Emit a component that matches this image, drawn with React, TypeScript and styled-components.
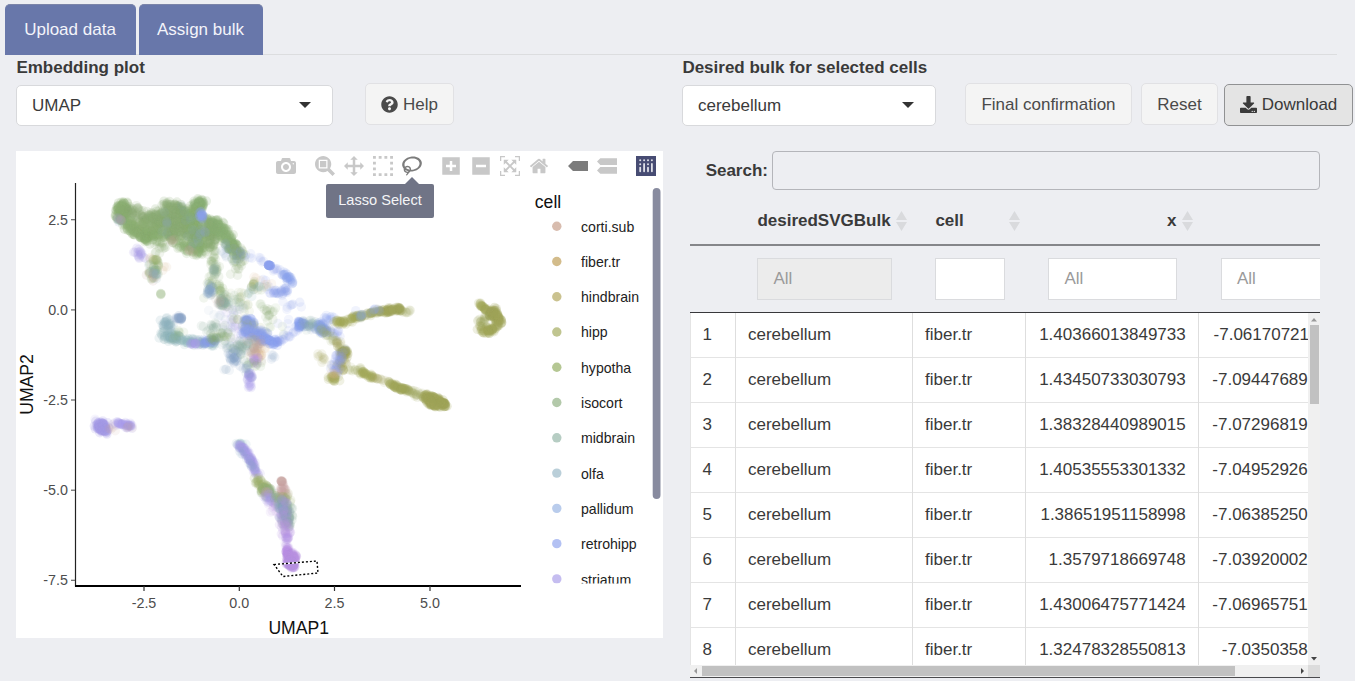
import React from "react";
import styled, { createGlobalStyle } from "styled-components";
import { FaDownload, FaQuestionCircle } from "react-icons/fa";

const GlobalStyle = createGlobalStyle`
  * { box-sizing: border-box; }
  body {
    margin: 0;
    background: #edeef2;
    color: #3a3a3a;
    font-family: "Liberation Sans", Arial, sans-serif;
    font-size: 17px;
    overflow: hidden;
  }
`;

const Page = styled.div`
  width: 1355px;
  height: 681px;
  overflow: hidden;
`;

const TabBar = styled.nav`
  display: flex;
  gap: 3px;
  width: 1332px;
  height: 51px;
  margin: 4px 0 0 5px;
  border-bottom: 1px solid #dcdddf;
`;

const Tab = styled.div<{ $width: number }>`
  width: ${(p) => p.$width}px;
  height: 51px;
  padding-right: 1px;
  line-height: 49px;
  text-align: center;
  color: #f3f4fa;
  background: #6877aa;
  border-top: 1px solid #7b84a8;
  border-radius: 5px 5px 0 0;
`;

const Columns = styled.div`
  display: flex;
  padding-left: 16px;
`;

const Column = styled.section<{ $width: number }>`
  width: ${(p) => p.$width}px;
  flex: none;
`;

const FieldLabel = styled.div`
  height: 28px;
  padding-top: 3px;
  padding-left: 0.4px;
  line-height: 20px;
  font-weight: bold;
`;

const Controls = styled.div`
  display: flex;
  align-items: flex-start;
  height: 68px;
`;

const Select = styled.div<{ $width: number; $gap: number }>`
  display: flex;
  align-items: center;
  justify-content: space-between;
  width: ${(p) => p.$width}px;
  height: 41px;
  margin: 2px ${(p) => p.$gap}px 0 0;
  padding: 1px 21px 0 15px;
  background: #fff;
  border: 1px solid #d8d9dc;
  border-radius: 5px;

  &::after {
    content: "";
    margin-top: -3px;
    border: 6px solid transparent;
    border-top-color: #333;
    border-bottom: 0;
  }
`;

const Button = styled.button<{ $width: number; $gap?: number; $active?: boolean }>`
  display: flex;
  align-items: center;
  justify-content: center;
  gap: 5px;
  width: ${(p) => p.$width}px;
  height: 42px;
  margin: ${(p) => (p.$active ? 1 : 0)}px ${(p) => p.$gap ?? 0}px 0 0;
  padding: ${(p) => (p.$active ? 0 : 2)}px 0 0;
  flex: none;
  white-space: nowrap;
  font: inherit;
  color: ${(p) => (p.$active ? "#3a3a3a" : "#4a4a4a")};
  background: ${(p) => (p.$active ? "#e4e4e4" : "#f4f4f4")};
  border: 1px solid ${(p) => (p.$active ? "#909193" : "#e1e1e4")};
  border-radius: 5px;

  svg {
    margin-top: -2px;
  }
`;

/* ---------- plot ---------- */

const PlotCard = styled.div`
  position: relative;
  width: 647px;
  height: 487px;
  background: #fff;
`;

const Chart = styled.svg`
  display: block;
  font-family: "Liberation Sans", Arial, sans-serif;
`;

const ModeBar = styled.div`
  position: absolute;
  top: 5px;
  right: 7px;
  display: flex;
  gap: 18.8px;
`;

const ModeGroup = styled.div`
  display: flex;
  gap: 9.3px;
`;

const ModeIcon = styled.svg<{ $on?: boolean }>`
  display: block;
  width: 20px;
  height: 20px;
  fill: ${(p) => (p.$on ? "#7c7c7c" : "#c8c8c8")};
`;

const Tooltip = styled.div`
  position: absolute;
  left: 310px;
  top: 33px;
  width: 108px;
  height: 34px;
  line-height: 33px;
  text-align: center;
  font-size: 14.6px;
  color: #f4f4f7;
  background: #707486;
  border-radius: 2px;

  &::before {
    content: "";
    position: absolute;
    left: 79px;
    top: -7px;
    border: 7px solid transparent;
    border-top: 0;
    border-bottom-color: #707486;
  }
`;

type Glyph = { w: number; d: string; on?: boolean };

const glyphGroups: Glyph[][] = [
  [{ w: 1000, d: "m500 450c-83 0-150-67-150-150 0-83 67-150 150-150 83 0 150 67 150 150 0 83-67 150-150 150z m400 150h-120c-16 0-34 13-39 29l-31 93c-6 15-23 28-40 28h-340c-16 0-34-13-39-28l-31-94c-6-15-23-28-40-28h-120c-55 0-100-45-100-100v-450c0-55 45-100 100-100h800c55 0 100 45 100 100v450c0 55-45 100-100 100z m-400-550c-138 0-250 112-250 250 0 138 112 250 250 250 138 0 250-112 250-250 0-138-112-250-250-250z m365 380c-19 0-35 16-35 35 0 19 16 35 35 35 19 0 35-16 35-35 0-19-16-35-35-35z" }],
  [
    { w: 1000, d: "m1000-25l-250 251c40 63 63 138 63 218 0 224-182 406-407 406-224 0-406-182-406-406s183-406 407-406c80 0 155 22 218 62l250-250 125 125z m-812 250l0 438 437 0 0-438-437 0z m62 375l313 0 0-312-313 0 0 312z" },
    { w: 1000, d: "m1000 350l-187 188 0-125-250 0 0 250 125 0-188 187-187-187 125 0 0-250-250 0 0 125-188-188 186-187 0 125 252 0 0-250-125 0 187-188 188 188-125 0 0 250 250 0 0-126 187 188z" },
    { w: 1000, d: "m0 850l0-143 143 0 0 143-143 0z m286 0l0-143 143 0 0 143-143 0z m285 0l0-143 143 0 0 143-143 0z m286 0l0-143 143 0 0 143-143 0z m-857-286l0-143 143 0 0 143-143 0z m857 0l0-143 143 0 0 143-143 0z m-857-285l0-143 143 0 0 143-143 0z m857 0l0-143 143 0 0 143-143 0z m-857-286l0-143 143 0 0 143-143 0z m286 0l0-143 143 0 0 143-143 0z m285 0l0-143 143 0 0 143-143 0z m286 0l0-143 143 0 0 143-143 0z" },
    { w: 1031, on: true, d: "m1018 538c-36 207-290 336-568 286-277-48-473-256-436-463 10-57 36-108 76-151-13-66 11-137 68-183 34-28 75-41 114-42l-55-70 0 0c-2-1-3-2-4-3-10-14-8-34 5-45 14-11 34-8 45 4 1 1 2 3 2 5l0 0 113 140c16 11 31 24 45 40 4 3 6 7 8 11 48-3 100 0 151 9 278 48 473 255 436 462z m-624-379c-80 14-149 48-197 96 42 42 109 47 156 9 33-26 47-66 41-105z m-187-74c-19 16-33 37-39 60 50-32 109-55 174-68-42-25-95-24-135 8z m360 75c-34-7-69-9-102-8 8 62-16 128-68 170-73 59-175 54-244-5-9 20-16 40-20 61-28 159 121 317 333 354s407-60 434-217c28-159-121-318-333-355z" },
  ],
  [
    { w: 875, d: "m1 787l0-875 875 0 0 875-875 0z m687-500l-187 0 0-187-125 0 0 187-188 0 0 125 188 0 0 187 125 0 0-187 187 0 0-125z" },
    { w: 875, d: "m0 788l0-876 875 0 0 876-875 0z m688-500l-500 0 0 125 500 0 0-125z" },
    { w: 1000, d: "m250 850l-187 0-63 0 0-62 0-188 63 0 0 188 187 0 0 62z m688 0l-188 0 0-62 188 0 0-188 62 0 0 188 0 62-62 0z m-875-938l0 188-63 0 0-188 0-62 63 0 187 0 0 62-187 0z m875 188l0-188-188 0 0-62 188 0 62 0 0 62 0 188-62 0z m-125 188l-1 0-93-94-156 156 156 156 92-93 2 0 0 250-250 0 0-2 93-92-156-156-156 156 94 92 0 2-250 0 0-250 0 0 93 93 157-156-157-156-93 94 0 0 0-250 250 0 0 0-94 93 156 157 156-157-93-93 0 0 250 0 0 250z" },
    { w: 929, d: "m786 296v-267q0-15-11-26t-25-10h-214v214h-143v-214h-214q-15 0-25 10t-11 26v267q0 1 0 2t0 2l321 264 321-264q1-1 1-4z m124 39l-34-41q-5-5-12-6h-2q-7 0-12 3l-386 322-386-322q-7-4-13-4-7 2-12 7l-35 41q-4 5-3 13t6 12l401 334q18 15 42 15t43-15l136-114v109q0 8 5 13t13 5h107q8 0 13-5t5-13v-227l122-102q5-5 6-12t-4-13z" },
  ],
  [
    { w: 1500, on: true, d: "m375 725l0 0-375-375 375-374 0-1 1125 0 0 750-1125 0z" },
    { w: 1125, d: "m187 786l0 2-187-188 188-187 0 0 937 0 0 373-938 0z m0-499l0 1-187-188 188-188 0 0 937 0 0 376-938-1z" },
  ],
];

const PlotlyLogo = () => (
  <ModeIcon viewBox="0 0 20 20">
    <rect width="20" height="20" fill="#474c73" />
    <g fill="#dfe0e8">
      <circle cx="4.2" cy="4.2" r="1" /><circle cx="8.1" cy="4.2" r="1" />
      <circle cx="12" cy="4.2" r="1" /><circle cx="15.9" cy="4.2" r="1" />
      <circle cx="4.2" cy="8.2" r="1" /><circle cx="12" cy="8.2" r="1" />
      <rect x="3.3" y="10.8" width="1.8" height="5.4" rx="0.9" />
      <rect x="7.2" y="7" width="1.8" height="9.2" rx="0.9" />
      <rect x="11.1" y="10.8" width="1.8" height="5.4" rx="0.9" />
      <rect x="15" y="7" width="1.8" height="9.2" rx="0.9" />
    </g>
  </ModeIcon>
);

const OLIVE = "#a0a55a";
const GREEN = "#8aad73";
const MOSS = "#9cad6c";
const SAGE = "#8cae9b";
const TEAL = "#8fb3bb";
const STEEL = "#8aa5c8";
const BLUE = "#8a9fec";
const PERI = "#a79ae8";
const VIOLET = "#b992e3";
const ROSE = "#c9a39f";
const TAN = "#d9b48c";

/* colour, path through the cluster, cell count, spread, opacity */
type Cluster = [string, number[], number, number, number];

const clusters: Cluster[] = [
  // large isocortex cloud
  [GREEN, [123, 206, 123, 212, 120, 221], 120, 5, 0.2],
  [GREEN, [130, 213, 158, 222], 110, 7, 0.13],
  [GREEN, [125, 222, 136, 231, 147, 239], 110, 4.4, 0.2],
  [GREEN, [142, 228, 160, 228], 70, 7, 0.15],
  [GREEN, [144, 238, 164, 234, 180, 237], 85, 5.5, 0.16],
  [GREEN, [163, 204, 176, 207, 185, 212], 52, 3.4, 0.18],
  [GREEN, [152, 220, 170, 218, 178, 235], 140, 7.5, 0.18],
  [GREEN, [174, 209, 184, 224, 194, 240], 160, 7, 0.18],
  [GREEN, [203, 203, 197, 206, 192, 218], 80, 3.8, 0.19],
  [GREEN, [188, 216, 200, 230, 203, 245], 140, 7.5, 0.16],
  [GREEN, [208, 222, 213, 230, 209, 245], 100, 4.8, 0.18],
  [GREEN, [213, 222, 225, 235, 237, 256], 180, 5.3, 0.19],
  [GREEN, [178, 243, 190, 248, 202, 250], 60, 4.6, 0.16],
  [GREEN, [158, 244, 162, 250], 14, 5, 0.12],
  [GREEN, [211, 246, 218, 270, 208, 294], 46, 4.5, 0.12],
  [SAGE, [216, 266, 212, 275], 12, 2.5, 0.16],
  [GREEN, [236, 248, 242, 258, 235, 276], 30, 4, 0.13],
  [STEEL, [118, 218, 121, 222], 6, 2, 0.14],
  [ROSE, [119, 219, 121, 222], 3, 2, 0.15],
  [STEEL, [165, 212, 168, 235], 7, 5, 0.1],
  [STEEL, [188, 212, 198, 240], 14, 9, 0.09],
  [BLUE, [201, 212, 202, 219], 17, 2, 0.19],
  [STEEL, [203, 230, 197, 241], 8, 3, 0.12],
  [ROSE, [169, 238, 174, 242], 5, 5, 0.1],
  [ROSE, [188, 250, 192, 252], 4, 2, 0.12],
  [STEEL, [222, 243, 236, 262], 14, 5, 0.11],
  // spur below the cloud
  [PERI, [137, 251, 141, 254, 140, 257], 17, 3.4, 0.16],
  [TAN, [142, 262, 165, 266], 7, 4, 0.12],
  [MOSS, [155, 258, 157, 263], 9, 2, 0.2],
  [GREEN, [155, 268, 152, 278], 24, 5, 0.16],
  [ROSE, [150, 275, 155, 277], 9, 4, 0.14],
  [TEAL, [153, 266, 157, 281], 12, 5, 0.14],
  [GREEN, [160.5, 293, 161, 294], 3, 0.5, 0.2],
  // blue arc
  [BLUE, [241, 253, 253, 257, 267, 264], 12, 3, 0.1],
  [BLUE, [269, 265, 269.5, 266], 15, 0.9, 0.23],
  [BLUE, [269, 268, 281, 272], 8, 2.5, 0.11],
  [BLUE, [284, 273, 288, 278, 293, 281], 28, 2.6, 0.16],
  [BLUE, [274, 292, 280, 293, 288, 289], 26, 2.8, 0.15],
  [BLUE, [262, 278, 268, 292], 6, 4, 0.12],
  [TAN, [251, 284, 271, 285], 8, 6, 0.1],
  [MOSS, [252, 283, 255, 286], 9, 2.5, 0.17],
  [TEAL, [262, 286, 248, 296], 10, 4, 0.12],
  [BLUE, [285, 308, 300, 302], 3, 1.5, 0.14],
  // neck region
  [STEEL, [212, 286, 208, 294], 20, 3, 0.17],
  [GREEN, [218, 285, 221, 293], 12, 3, 0.15],
  [SAGE, [222, 298, 224, 306], 38, 4, 0.14],
  [ROSE, [220, 298, 226, 308], 8, 5, 0.1],
  [MOSS, [222, 294, 248, 304], 22, 8, 0.09],
  [SAGE, [230, 298, 242, 309], 15, 6, 0.1],
  [PERI, [228, 312, 240, 340], 46, 12, 0.05],
  [STEEL, [215, 312, 245, 330], 24, 11, 0.07],
  [GREEN, [248, 282, 275, 328], 15, 10, 0.1],
  [BLUE, [292, 300, 285, 327], 9, 8, 0.1],
  [GREEN, [268, 310, 271, 317], 10, 3, 0.13],
  // western arm
  [TEAL, [164, 321, 170, 328], 32, 4, 0.17],
  [STEEL, [177, 319, 181, 317], 19, 2.2, 0.2],
  [TEAL, [163, 333, 171, 339, 179, 337], 65, 3.9, 0.16],
  [GREEN, [180, 332, 174, 340], 8, 4, 0.1],
  [TEAL, [183, 341, 214, 343], 60, 3, 0.15],
  [PERI, [190, 343, 197, 343], 13, 1.8, 0.15],
  [BLUE, [204, 343, 215, 340], 28, 2.4, 0.14],
  [GREEN, [210, 338, 228, 335], 26, 4, 0.14],
  [SAGE, [203, 330, 223, 326], 18, 5.5, 0.12],
  [TEAL, [222, 345, 246, 349], 32, 8, 0.1],
  // centre
  [BLUE, [246, 320, 253, 325], 40, 2.6, 0.18],
  [MOSS, [240, 321, 263, 332], 17, 7, 0.12],
  [BLUE, [245, 330, 255, 335, 264, 337], 105, 5.4, 0.15],
  [BLUE, [263, 338, 271, 342, 278, 342], 42, 2.7, 0.18],
  [STEEL, [232, 354, 236, 360], 28, 4.2, 0.14],
  [SAGE, [235, 346, 258, 348], 30, 7, 0.12],
  [TAN, [250, 349, 262, 354], 20, 6, 0.11],
  [ROSE, [253, 342, 256, 356], 24, 6, 0.12],
  [VIOLET, [257, 357, 254, 364], 13, 2.5, 0.17],
  [GREEN, [242, 363, 263, 366], 12, 6, 0.1],
  [PERI, [249, 371, 250, 379], 18, 2, 0.17],
  [STEEL, [246, 364, 250, 374], 10, 4, 0.12],
  [PERI, [249, 380, 251, 388], 8, 2, 0.15],
  [STEEL, [224, 369, 229, 370], 4, 1.5, 0.1],
  [STEEL, [272, 358, 276, 354], 5, 2, 0.11],
  // bridge to the right
  [BLUE, [278, 343, 290, 334, 297, 326], 17, 3, 0.11],
  [BLUE, [298, 325, 303, 324], 36, 2.7, 0.17],
  [STEEL, [302, 325, 316, 326], 26, 4, 0.11],
  [BLUE, [318, 325, 324, 330], 48, 3.8, 0.16],
  [SAGE, [310, 326, 322, 330], 14, 5, 0.1],
  [BLUE, [324, 328, 337, 337], 20, 4.5, 0.12],
  [BLUE, [326, 316, 331, 322], 11, 3, 0.13],
  [MOSS, [322, 331, 334, 339], 17, 5, 0.12],
  [OLIVE, [334, 323, 348, 322], 28, 2.2, 0.16],
  [OLIVE, [348, 320, 363, 315], 34, 2.2, 0.16],
  [OLIVE, [363, 315, 376, 312], 20, 1.8, 0.15],
  [OLIVE, [376, 312, 387, 311], 25, 1.6, 0.18],
  [OLIVE, [387, 310, 401, 309], 48, 2, 0.19],
  [OLIVE, [400, 311, 411, 312], 8, 1.5, 0.12],
  [STEEL, [361, 315, 361, 316], 7, 1.5, 0.15],
  [BLUE, [350, 314, 386, 309], 8, 3, 0.13],
  // descending olive branch
  [OLIVE, [333, 340, 342, 347], 12, 3, 0.13],
  [OLIVE, [342, 351, 346, 353], 38, 2.8, 0.19],
  [OLIVE, [342, 355, 342, 370], 34, 4, 0.14],
  [OLIVE, [317, 352, 329, 363], 10, 4, 0.11],
  [BLUE, [341, 351, 335, 372], 34, 3.6, 0.12],
  [OLIVE, [332, 377, 336, 379], 24, 3, 0.16],
  [TAN, [331, 371, 335, 377], 6, 4, 0.12],
  [OLIVE, [348, 369, 361, 371], 16, 3, 0.1],
  [OLIVE, [361, 372, 374, 378], 30, 1.5, 0.16],
  [OLIVE, [373, 377, 389, 383], 13, 1.5, 0.11],
  [OLIVE, [389, 383, 399, 388], 26, 1.6, 0.18],
  [OLIVE, [399, 388, 408, 391], 30, 1.6, 0.17],
  [OLIVE, [408, 392, 424, 396], 22, 2.2, 0.12],
  [OLIVE, [424, 396, 437, 400, 446, 406], 105, 2.2, 0.21],
  [OLIVE, [426, 398, 433, 405, 442, 404], 60, 2.2, 0.21],
  // isolated group at the right
  [OLIVE, [480, 304, 483, 307], 16, 1.4, 0.16],
  [OLIVE, [484, 308, 490, 312], 12, 1.6, 0.16],
  [OLIVE, [488, 314, 496, 311], 42, 3.2, 0.22],
  [OLIVE, [494, 314, 500, 321, 493, 331], 56, 2.6, 0.21],
  [OLIVE, [492, 331, 480, 328], 42, 3.2, 0.18],
  [OLIVE, [478, 322, 488, 320], 18, 3.4, 0.12],
  // lower left group
  [PERI, [98, 424, 104, 426, 102, 431], 95, 4, 0.2],
  [PERI, [97, 420, 99, 422], 3, 2, 0.1],
  [ROSE, [109, 427, 114, 427], 5, 3, 0.11],
  [PERI, [116, 423, 125, 425, 133, 426], 42, 2.2, 0.15],
  [ROSE, [125, 426, 133, 427], 4, 1.8, 0.1],
  // lower tail
  [TEAL, [237, 444, 246, 444], 10, 2.2, 0.12],
  [PERI, [239, 445, 247, 453, 253, 464], 75, 2.1, 0.14],
  [PERI, [252, 464, 258, 475], 25, 2, 0.13],
  [STEEL, [238, 444, 257, 474], 14, 2, 0.11],
  [MOSS, [257, 478, 261, 486], 20, 2.6, 0.16],
  [MOSS, [261, 488, 270, 490], 42, 3.2, 0.19],
  [SAGE, [264, 490, 270, 496, 285, 500], 38, 4, 0.14],
  [ROSE, [264, 490, 269, 496], 8, 3, 0.11],
  [PERI, [267, 495, 271, 502], 16, 2.6, 0.14],
  [ROSE, [281.5, 481, 282, 482], 9, 0.6, 0.2],
  [ROSE, [283, 487, 284, 499], 34, 4, 0.13],
  [MOSS, [278, 496, 288, 501], 18, 5.5, 0.12],
  [VIOLET, [273, 504, 282, 516], 18, 5, 0.1],
  [VIOLET, [283, 500, 285, 524], 38, 4, 0.13],
  [SAGE, [280, 501, 287, 510, 289, 527], 80, 4.6, 0.15],
  [STEEL, [281, 503, 286, 520], 34, 4.4, 0.13],
  [VIOLET, [283, 502, 285, 524], 16, 3.5, 0.1],
  [VIOLET, [283, 522, 287, 538], 26, 3.4, 0.14],
  [VIOLET, [286, 537, 287, 549], 14, 2.4, 0.12],
  [VIOLET, [287, 547, 288, 556], 28, 1.4, 0.19],
  [VIOLET, [294, 554, 289, 562], 52, 3, 0.2],
  [VIOLET, [288, 562, 294, 567], 54, 2, 0.24],
];

const seeded = (seed: number) => () => {
  seed = (seed + 0x6d2b79f5) | 0;
  let t = Math.imul(seed ^ (seed >>> 15), 1 | seed);
  t = (t + Math.imul(t ^ (t >>> 7), 61 | t)) ^ t;
  return ((t ^ (t >>> 14)) >>> 0) / 4294967296;
};

const cells = clusters.flatMap(([color, path, count, spread, opacity], k) => {
  const rnd = seeded(k * 97 + 11);
  const segments = path.length / 2 - 1;
  return Array.from({ length: count }, (_, i) => {
    const t = rnd() * segments;
    const s = Math.min(Math.floor(t), segments - 1);
    const f = t - s;
    const x = path[s * 2] + (path[s * 2 + 2] - path[s * 2]) * f;
    const y = path[s * 2 + 1] + (path[s * 2 + 3] - path[s * 2 + 1]) * f;
    const dx = (rnd() + rnd() - 1) * spread * 1.5;
    const dy = (rnd() + rnd() - 1) * spread * 1.5;
    return <circle key={`${k}-${i}`} cx={x + dx} cy={y + dy} r={4.7} fill={color} fillOpacity={opacity} />;
  });
});

const legend: [string, string][] = [
  ["corti.sub", "#d8bcae"], ["fiber.tr", "#d3bc8b"], ["hindbrain", "#cac28f"],
  ["hipp", "#c0c590"], ["hypotha", "#b5c793"], ["isocort", "#b3c9aa"],
  ["midbrain", "#b6cdc3"], ["olfa", "#bacfd9"], ["pallidum", "#b9ccec"],
  ["retrohipp", "#b3c1f3"], ["striatum", "#c5bdf0"],
];

const xTicks: [number, string][] = [[144, "-2.5"], [239.3, "0.0"], [334.5, "2.5"], [430, "5.0"]];
const yTicks: [number, string][] = [[219.7, "2.5"], [309.9, "0.0"], [400, "-2.5"], [490.2, "-5.0"], [580.3, "-7.5"]];

const EmbeddingPlot = () => (
  <PlotCard>
    <Chart width="647" height="487" viewBox="16 151 647 487">
      <g>{cells}</g>
      <g stroke="#222" strokeWidth="1.2">
        <path d="M75.5 183V586.5" />
        <path d="M75 586H521" stroke="#000" strokeWidth="2" />
        {xTicks.map(([x]) => <path key={x} d={`M${x} 586v5`} stroke="#333" />)}
        {yTicks.map(([y]) => <path key={y} d={`M71 ${y}h4`} stroke="#666" />)}
      </g>
      <g fontSize="14.3" fill="#4d4d4d">
        {xTicks.map(([x, label]) => <text key={x} x={x} y="608" textAnchor="middle">{label}</text>)}
        {yTicks.map(([y, label]) => <text key={y} x="68" y={y + 4.8} textAnchor="end">{label}</text>)}
      </g>
      <g fontSize="17.6" fill="#111">
        <text x="298.7" y="634" textAnchor="middle">UMAP1</text>
        <text transform="translate(33 384.5) rotate(-90)" textAnchor="middle">UMAP2</text>
        <text x="534.8" y="208">cell</text>
      </g>
      <path d="M274 564.5L317 561L318 573L283 576.5Z" fill="none" stroke="#fff" strokeWidth="1.3" />
      <path d="M274 564.5L317 561L318 573L283 576.5Z" fill="none" stroke="#000" strokeWidth="1.4" strokeDasharray="2 2" />
      <clipPath id="legend-view"><rect x="534" y="212" width="116" height="371.4" /></clipPath>
      <g clipPath="url(#legend-view)" fontSize="14.1" fill="#222">
        {legend.map(([name, color], i) => (
          <g key={name}>
            <circle cx="556.8" cy={226.2 + i * 35.27} r="4.7" fill={color} />
            <text x="581" y={231.6 + i * 35.29}>{name}</text>
          </g>
        ))}
      </g>
      <rect x="652.7" y="188" width="7.8" height="311" rx="3.9" fill="#888b9f" />
    </Chart>
    <ModeBar>
      {glyphGroups.map((group, g) => (
        <ModeGroup key={g}>
          {group.map((icon, i) => (
            <ModeIcon key={i} $on={icon.on} viewBox={`0 0 ${icon.w} 1000`}>
              <path transform="matrix(1 0 0 -1 0 850)" d={icon.d} />
            </ModeIcon>
          ))}
        </ModeGroup>
      ))}
      <PlotlyLogo />
    </ModeBar>
    <Tooltip>Lasso Select</Tooltip>
  </PlotCard>
);

/* ---------- table ---------- */

const TablePanel = styled.div`
  width: 630px;
  margin-left: 8px;
`;

const SearchRow = styled.label`
  display: flex;
  align-items: center;
  justify-content: flex-end;
  gap: 4px;
  height: 39px;
  line-height: 21px;
  font-weight: bold;
`;

const SearchInput = styled.input`
  width: 548px;
  height: 39px;
  background: transparent;
  border: 1px solid #b4b5ba;
  border-radius: 4px;
`;

const HeadRow = styled.div`
  display: grid;
  grid-template-columns: 55px 178px 113px 172.5px 180px;
  width: 630px;
  height: 56px;
  padding-top: 7px;
  overflow: hidden;
  border-bottom: 2px solid #85868a;
`;

const HeadCell = styled.div<{ $right?: boolean }>`
  display: flex;
  align-items: center;
  justify-content: ${(p) => (p.$right ? "flex-end" : "space-between")};
  gap: 5px;
  padding: 0 16px 0 12.4px;
  line-height: 20px;
  font-weight: bold;
`;

const SortMark = styled.svg`
  flex: none;
  width: 11px;
  height: 20px;
  fill: #d9dadd;
`;

const FilterRow = styled(HeadRow)`
  height: 67px;
  padding-top: 12px;
  border-bottom: 1px solid #38383b;
`;

const FilterCell = styled.div`
  padding: 0 31.5px 0 12.4px;
`;

const FilterBox = styled.div<{ $muted?: boolean }>`
  height: 42px;
  padding-left: 15px;
  line-height: 40px;
  color: #9a9a9a;
  background: ${(p) => (p.$muted ? "#ececec" : "#fff")};
  border: 1px solid #dadbde;
`;

const ScrollBody = styled.div`
  display: grid;
  grid-template-columns: 618px 12px;
  grid-template-rows: 352px 12px;
  width: 630px;
  height: 365px;
  border-bottom: 1px solid #4a4a4d;
`;

const Rows = styled.div`
  overflow: hidden;
  background: #fff;
`;

const Row = styled.div`
  display: grid;
  grid-template-columns: 46px 177px 113px 173px 180px;
  height: 45.06px;
  border-bottom: 1px solid #e4e4e4;
`;

const Cell = styled.div<{ $numeric?: boolean }>`
  padding: 0 ${(p) => (p.$numeric ? 12.3 : 12)}px;
  line-height: 44.9px;
  border-right: 1px solid #dedede;
  text-align: ${(p) => (p.$numeric ? "right" : "left")};
  &:first-child {
    padding-left: 11.5px;
    border-left: 1px solid #e4e4e4;
  }
  &:last-child {
    padding-right: 13.5px;
  }
`;

const ScrollTrack = styled.div<{ $vertical?: boolean }>`
  display: flex;
  flex-direction: ${(p) => (p.$vertical ? "column" : "row")};
  align-items: center;
  justify-content: space-between;
  background: #f0f0f0;
`;

const ScrollThumb = styled.div<{ $vertical?: boolean }>`
  width: ${(p) => (p.$vertical ? "9px" : "533px")};
  height: ${(p) => (p.$vertical ? "79px" : "10px")};
  margin-${(p) => (p.$vertical ? "bottom" : "right")}: auto;
  background: #c1c1c1;
`;

const ScrollArrow = styled.svg`
  flex: none;
  width: 12px;
  height: 12px;
`;

const ScrollCorner = styled.div`
  background: #dcdcdc;
`;

const Sort = () => (
  <SortMark viewBox="0 0 11 20"><path d="M5.5 0L11 9H0zM5.5 20L0 11h11z" /></SortMark>
);

const Arrow = ({ d, color }: { d: string; color: string }) => (
  <ScrollArrow viewBox="0 0 12 12"><path d={d} fill={color} /></ScrollArrow>
);

/* the y values run past the right edge of the scroll area */
const records: [string, string][] = [
  ["1.40366013849733", "-7.06170721172333"],
  ["1.43450733030793", "-7.09447689174652"],
  ["1.38328440989015", "-7.07296819805145"],
  ["1.40535553301332", "-7.04952926754952"],
  ["1.38651951158998", "-7.06385250210762"],
  ["1.3579718669748", "-7.03920002102852"],
  ["1.43006475771424", "-7.06965751886368"],
  ["1.32478328550813", "-7.0350358498096"],
];

const BulkTable = () => (
  <TablePanel>
    <SearchRow>Search:<SearchInput /></SearchRow>
    <HeadRow>
      <HeadCell />
      <HeadCell>desiredSVGBulk<Sort /></HeadCell>
      <HeadCell>cell<Sort /></HeadCell>
      <HeadCell $right>x<Sort /></HeadCell>
      <HeadCell />
    </HeadRow>
    <FilterRow>
      <FilterCell />
      <FilterCell><FilterBox $muted>All</FilterBox></FilterCell>
      <FilterCell><FilterBox /></FilterCell>
      <FilterCell><FilterBox>All</FilterBox></FilterCell>
      <FilterCell><FilterBox>All</FilterBox></FilterCell>
    </FilterRow>
    <ScrollBody>
      <Rows>
        {records.map(([x, y], i) => (
          <Row key={x}>
            <Cell>{i + 1}</Cell>
            <Cell>cerebellum</Cell>
            <Cell>fiber.tr</Cell>
            <Cell $numeric>{x}</Cell>
            <Cell $numeric>{y}</Cell>
          </Row>
        ))}
      </Rows>
      <ScrollTrack $vertical>
        <Arrow d="M6 5L9 8.5H3z" color="#999" />
        <ScrollThumb $vertical />
        <Arrow d="M6 7.5L9 4H3z" color="#444" />
      </ScrollTrack>
      <ScrollTrack>
        <Arrow d="M4 6L7 3v6z" color="#999" />
        <ScrollThumb />
        <Arrow d="M8 6L5 3v6z" color="#444" />
      </ScrollTrack>
      <ScrollCorner />
    </ScrollBody>
  </TablePanel>
);

export default function App() {
  return (
    <Page>
      <GlobalStyle />
      <TabBar>
        <Tab $width={131}>Upload data</Tab>
        <Tab $width={124}>Assign bulk</Tab>
      </TabBar>
      <Columns>
        <Column $width={666}>
          <FieldLabel>Embedding plot</FieldLabel>
          <Controls>
            <Select $width={317} $gap={32}>UMAP</Select>
            <Button $width={89}><FaQuestionCircle size={17} />Help</Button>
          </Controls>
          <EmbeddingPlot />
        </Column>
        <Column $width={673}>
          <FieldLabel>Desired bulk for selected cells</FieldLabel>
          <Controls>
            <Select $width={254} $gap={29}>cerebellum</Select>
            <Button $width={167} $gap={9}>Final confirmation</Button>
            <Button $width={77} $gap={6}>Reset</Button>
            <Button $width={129} $active><FaDownload size={17} />Download</Button>
          </Controls>
          <BulkTable />
        </Column>
      </Columns>
    </Page>
  );
}
